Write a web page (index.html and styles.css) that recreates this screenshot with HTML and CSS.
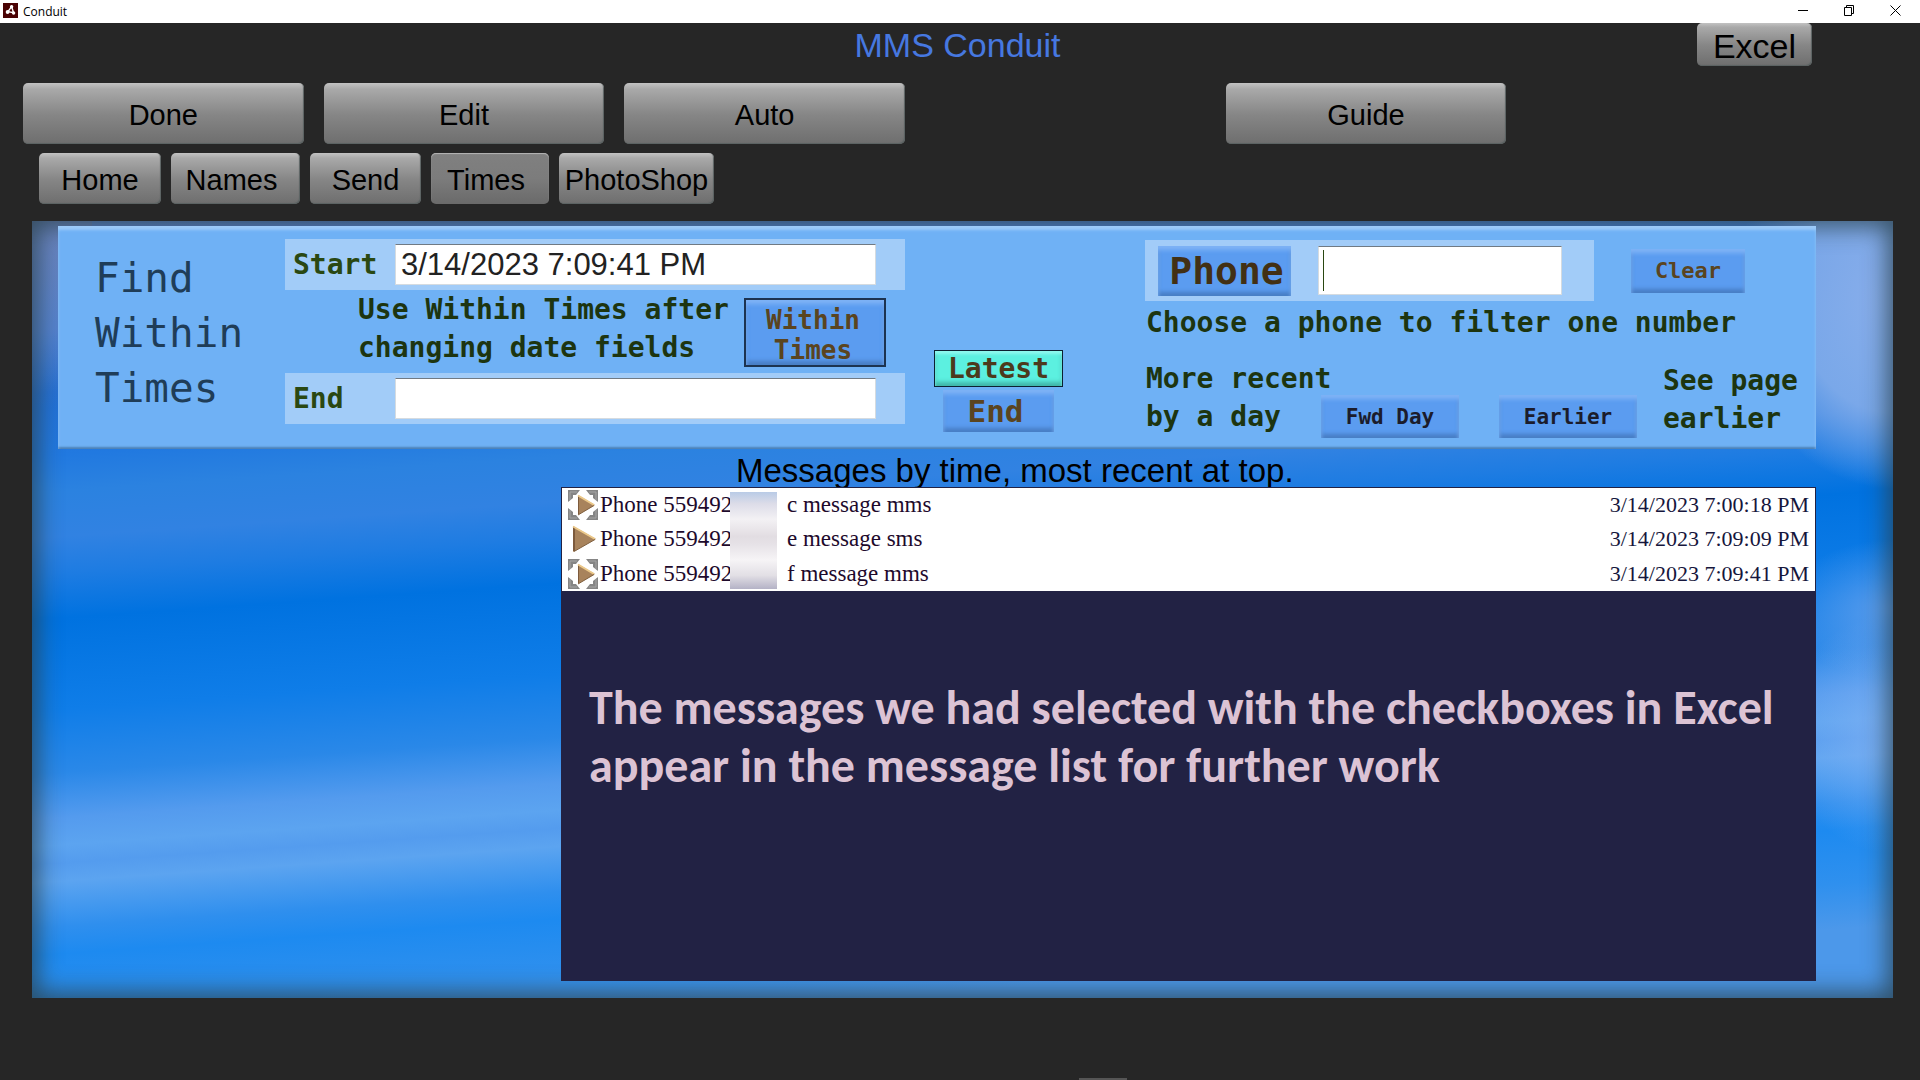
FILE: index.html
```html
<!DOCTYPE html>
<html lang="en">
<head>
    <meta charset="UTF-8">
    <meta name="viewport" content="width=device-width, initial-scale=1.0">
    <title>Conduit</title>
    <link rel="stylesheet" href="styles.css">
</head>
<body>
    <div class="titlebar">
        <svg class="app-icon" width="15" height="15" viewBox="0 0 15 15">
            <rect width="15" height="15" fill="#4a0203"/>
            <path d="M8.6 3.6 L5 8.6 L10.6 9.8 Z" fill="none" stroke="#fff" stroke-width="1.4"/>
            <circle cx="8.6" cy="3.8" r="1.7" fill="#fff"/>
            <circle cx="4.6" cy="9" r="1.9" fill="#fff"/>
            <circle cx="10.6" cy="10" r="1.7" fill="#fff"/>
        </svg>
        <span class="app-name">Conduit</span>
        <button class="win-btn" aria-label="Minimize">
            <svg width="11" height="11" viewBox="0 0 11 11"><path d="M0 5.5h10" stroke="#000"/></svg>
        </button>
        <button class="win-btn" aria-label="Restore">
            <svg width="11" height="11" viewBox="0 0 11 11"><path d="M.5 2.5h7v8h-7zM2.5 2.5v-2h7v8h-2" fill="none" stroke="#000"/></svg>
        </button>
        <button class="win-btn" aria-label="Close">
            <svg width="11" height="11" viewBox="0 0 11 11"><path d="M.5 .5l10 10M10.5 .5l-10 10" stroke="#000"/></svg>
        </button>
    </div>

    <header class="header">
        <h1 class="title">MMS Conduit</h1>
        <button class="btn btn-excel">Excel</button>
    </header>

    <div class="actions">
        <button class="btn">Done</button>
        <button class="btn">Edit</button>
        <button class="btn">Auto</button>
        <button class="btn btn-guide">Guide</button>
    </div>

    <nav class="tabs">
        <button class="btn tab-home">Home</button>
        <button class="btn tab-names">Names</button>
        <button class="btn tab-send">Send</button>
        <button class="btn tab-times active">Times</button>
        <button class="btn tab-photo">PhotoShop</button>
    </nav>

    <main class="stage">
        <section class="filters">
            <h2 class="filters-title">Find<br>Within<br>Times</h2>

            <div class="times">
                <div class="field">
                    <label for="start">Start</label>
                    <input type="text" id="start" value="3/14/2023 7:09:41 PM">
                </div>
                <div class="times-hint">
                    <p class="hint">Use Within Times after<br>changing date fields</p>
                    <button class="blue-btn btn-within">Within<br>Times</button>
                </div>
                <div class="field">
                    <label for="end">End</label>
                    <input type="text" id="end">
                </div>
            </div>

            <div class="jump">
                <button class="blue-btn btn-latest">Latest</button>
                <button class="blue-btn btn-end">End</button>
            </div>

            <div class="phone">
                <div class="phone-row">
                    <div class="phone-field">
                        <button class="blue-btn btn-phone" id="phone-label">Phone</button>
                        <div class="phone-input">
                            <input type="text" id="phone" aria-labelledby="phone-label">
                            <span class="caret"></span>
                        </div>
                    </div>
                    <button class="blue-btn btn-clear">Clear</button>
                </div>
                <p class="hint hint-phone">Choose a phone to filter one number</p>
                <div class="paging">
                    <p class="hint hint-recent">More recent<br>by a day</p>
                    <button class="blue-btn btn-page">Fwd Day</button>
                    <button class="blue-btn btn-page">Earlier</button>
                    <p class="hint hint-earlier">See page<br>earlier</p>
                </div>
            </div>
        </section>

        <section class="messages">
            <h2 class="messages-title">Messages by time, most recent at top.</h2>
            <div class="list">
                <table>
                    <tr>
                        <td class="col-icon"><svg width="30" height="30"><use href="#play-framed"/></svg></td>
                        <td class="col-phone">Phone 559492</td>
                        <td>c message mms</td>
                        <td class="col-time">3/14/2023 7:00:18 PM</td>
                    </tr>
                    <tr>
                        <td class="col-icon"><svg width="30" height="30"><use href="#play"/></svg></td>
                        <td class="col-phone">Phone 559492</td>
                        <td>e message sms</td>
                        <td class="col-time">3/14/2023 7:09:09 PM</td>
                    </tr>
                    <tr>
                        <td class="col-icon"><svg width="30" height="30"><use href="#play-framed"/></svg></td>
                        <td class="col-phone">Phone 559492</td>
                        <td>f message mms</td>
                        <td class="col-time">3/14/2023 7:09:41 PM</td>
                    </tr>
                </table>
                <div class="mask"></div>
            </div>
            <p class="note">The messages we had selected with the checkboxes in Excel appear in the message list for further work</p>
        </section>
    </main>

    <footer class="footer"><span class="grip"></span></footer>

    <svg class="symbols" width="0" height="0">
        <symbol id="play" viewBox="0 0 30 30">
            <path d="M5 2l23 13L5 28z" fill="#a8835c"/>
            <path d="M6 3v24" stroke="#7d5a3c" stroke-width="2"/>
            <path d="M5 2.5l22 12.5" stroke="#ecc98a" stroke-width="2"/>
            <path d="M27 15.5L6 27.5" stroke="#80603f" stroke-width="1"/>
        </symbol>
        <symbol id="play-framed" viewBox="0 0 30 30">
            <path d="M0 0h12l-4 5H5v3l-5 4z M30 0H18l4 5h3v3l5 4z M0 30h12l-4-5H5v-3l-5-4z M30 30H18l4-5h3v-3l5-4z" fill="#858585"/>
            <path d="M2 10V2h7M21 2h7v8M2 20v8h7M21 28h7v-8" fill="none" stroke="#a5a5a5"/>
            <path d="M10 5l17 10-17 10z" fill="#a8835c"/>
            <path d="M10.500 6v18" stroke="#7d5a3c"/>
            <path d="M10 5.500l16 9.500" stroke="#ecc98a" stroke-width="2"/>
            <path d="M26 15.500L10 25" stroke="#80603f"/>
        </symbol>
    </svg>
</body>
</html>
```

FILE: styles.css
```css
* {
    box-sizing: border-box;
}
body {
    margin: 0;
    min-height: 100vh;
    display: flex;
    flex-direction: column;
    background-color: #262626;
    font-family: Arial, "Liberation Sans", sans-serif;
}
h1, h2, p {
    margin: 0;
    font-weight: normal;
}
button {
    padding: 0;
    border: none;
    font-family: inherit;
    cursor: pointer;
}

/* window title bar */
.titlebar {
    display: flex;
    align-items: center;
    height: 23px;
    padding: 0 2px 2px 3px;
    background-color: #fff;
}
.app-name {
    flex: 1;
    margin-left: 5px;
    padding-top: 2px;
    font-family: "Segoe UI", "Open Sans", sans-serif;
    font-size: 12px;
    line-height: 19px;
}
.win-btn {
    display: flex;
    justify-content: center;
    align-items: center;
    width: 46px;
    height: 21px;
    background: none;
}

/* gray buttons */
.btn {
    padding-top: 2px;
    color: #000;
    font-size: 29px;
    line-height: 36px;
    white-space: nowrap;
    border-radius: 5px;
    background: linear-gradient(#c2c2c2, #a9a9a9 10%, #989898 30%, #868686 52%, #6e6e6e);
    box-shadow: inset -1px -1px 1px #5a6262;
}
.btn.active {
    background: linear-gradient(#808080, #7c7c7c 50%, #6a6a6a);
    box-shadow: inset 0 1px 1px #b5b5b5;
}
.header {
    display: grid;
    grid-template-columns: 1fr auto 1fr;
    align-items: start;
    height: 60px;
}
.title {
    grid-column: 2;
    padding-right: 5px;
    color: #4678e0;
    font-size: 34px;
    line-height: 45px;
}
.btn-excel {
    justify-self: end;
    width: 115px;
    height: 43px;
    margin-right: 108px;
    font-size: 34px;
}
.actions {
    display: grid;
    grid-template-columns: repeat(6, 1fr);
    gap: 20px;
    padding: 0 113px 0 23px;
}
.actions .btn {
    height: 61px;
}
.btn-guide {
    grid-column: 5;
}
.tabs {
    display: flex;
    gap: 10px;
    padding: 9px 39px 17px;
}
.tabs .btn {
    height: 51px;
}
.tab-home {
    width: 122px;
}
.tab-names {
    width: 129px;
    padding-right: 8px;
}
.tab-send {
    width: 111px;
}
.tab-times {
    width: 118px;
    padding-right: 8px;
}
.tab-photo {
    width: 155px;
}

/* blue sky area */
.stage {
    margin: 0 27px 0 32px;
    padding: 5px 77px 17px 26px;
    background:
        linear-gradient(rgba(110, 130, 180, 0.7), rgba(110, 130, 180, 0) 24%) left top / 60px 100% no-repeat,
        radial-gradient(ellipse 160px 190px at 100% 10%, rgba(143, 178, 236, 0.95), rgba(130, 172, 234, 0.9) 60%, rgba(130, 172, 234, 0)),
        radial-gradient(ellipse 110px 70px at 100% 50%, rgba(110, 165, 238, 0.8), rgba(110, 165, 238, 0)),
        radial-gradient(ellipse 110px 120px at 100% 66%, rgba(130, 178, 244, 0.8), rgba(130, 178, 244, 0)),
        linear-gradient(176deg, #5f84cc 0, #4a82d8 12%, #2270d6 19%, #2179e0 26%, #2b82e0 30%, #3182e2 35%, #1e7ce2 39%, #0072e0 44%, #0f7de8 54%, #2a88e8 61%, #549bee 66%, #5ca4f0 69%, #549cee 71%, #5ca4f0 73%, #2f8fee 78%, #1d8af0 81%, #2f90ee 87%, #4c98ea 92%, #4c98ea);
    box-shadow: inset 0 0 24px 5px rgba(42, 66, 78, 0.85);
}
.filters {
    display: flex;
    align-items: flex-start;
    height: 223px;
    background-color: #6fb1f5;
    box-shadow: inset 0 4px 3px #9ccaf9, inset 0 -3px 2px -1px #4c81b6;
    font-family: Consolas, "DejaVu Sans Mono", monospace;
}
.filters-title {
    width: 227px;
    padding: 25px 0 0 37px;
    color: #1f3d58;
    font-size: 41px;
    line-height: 55px;
}
.times {
    width: 620px;
    padding-top: 13px;
}
.field {
    display: flex;
    align-items: center;
    height: 51px;
    padding: 0 29px 0 8px;
    background-color: #a2ccf8;
}
.field label {
    width: 102px;
    color: #2a4812;
    font-size: 28px;
    font-weight: bold;
}
.field input, .phone-input input {
    min-width: 0;
    border: 1px solid #d5dbe0;
    border-top: 1px solid #707a84;
    border-radius: 0;
    background-color: #fff;
    color: #222;
    font-family: Arial, "Liberation Sans", sans-serif;
    font-size: 31px;
    outline: none;
}
.field input {
    flex: 1;
    height: 41px;
    padding: 0 5px;
}
.times-hint {
    display: flex;
    justify-content: space-between;
    align-items: center;
    height: 83px;
    padding: 1px 19px 0 73px;
}
.hint {
    align-self: flex-start;
    color: #1d3510;
    font-size: 28px;
    font-weight: bold;
    line-height: 38px;
    white-space: nowrap;
}
.blue-btn {
    background-color: #5b9cf0;
    box-shadow: inset 0 4px 4px #7fb3f6, inset 0 -4px 4px #477dc4;
    color: #5a4420;
    font-weight: bold;
}
.btn-within {
    width: 142px;
    height: 69px;
    padding: 5px 4px 0 0;
    border: 2px solid #1c3350;
    font-size: 26px;
    line-height: 30px;
}
.jump {
    display: flex;
    flex-direction: column;
    align-items: center;
    gap: 3px;
    width: 129px;
    margin-left: 29px;
    padding-top: 124px;
}
.btn-latest {
    width: 129px;
    height: 37px;
    border: 1px solid #0c2030;
    background-color: #5cf0e0;
    box-shadow: inset 0 3px 3px #8ff8ee, inset 0 -4px 4px #3fb5a8;
    color: #4c3a1c;
    font-size: 28px;
    line-height: 34px;
}
.btn-end {
    width: 111px;
    height: 42px;
    padding-right: 6px;
    font-size: 31px;
    line-height: 40px;
}
.phone {
    flex: 1;
    margin-left: 82px;
    padding-top: 14px;
}
.phone-row {
    display: flex;
    align-items: center;
    gap: 37px;
}
.phone-field {
    display: flex;
    align-items: center;
    width: 449px;
    height: 61px;
    padding: 0 32px 0 13px;
    background-color: #a2ccf8;
}
.btn-phone {
    width: 133px;
    height: 50px;
    padding-left: 4px;
    color: #423014;
    font-size: 38px;
    line-height: 48px;
}
.phone-input {
    position: relative;
    flex: 1;
    margin-left: 27px;
}
.phone-input input {
    display: block;
    width: 100%;
    height: 49px;
    padding: 0 5px;
}
.caret {
    position: absolute;
    top: 4px;
    bottom: 4px;
    left: 5px;
    width: 1px;
    background-color: #2a4812;
}
.btn-clear {
    width: 114px;
    height: 44px;
    font-size: 22px;
}
.hint-phone {
    padding: 3px 0 0 1px;
}
.paging {
    display: flex;
    align-items: flex-end;
    height: 78px;
    margin-top: 18px;
    padding-left: 1px;
}
.hint-recent {
    width: 175px;
}
.btn-page {
    width: 138px;
    height: 43px;
    margin-right: 40px;
    color: #1b1c2c;
    font-size: 21px;
}
.hint-earlier {
    align-self: flex-end;
    margin-left: -14px;
}

/* message list */
.messages {
    margin-left: 503px;
    padding-top: 2px;
}
.messages-title {
    height: 36px;
    padding-left: 175px;
    font-size: 33px;
    line-height: 40px;
    white-space: nowrap;
}
.list {
    position: relative;
    border: 1px solid #222244;
    border-bottom: none;
    background-color: #fff;
    font-family: "Times New Roman", "Liberation Serif", serif;
}
.list table {
    width: 100%;
    height: 103px;
    border-collapse: collapse;
    color: #1e0a2c;
    font-size: 23px;
}
.list td {
    height: 34px;
    padding: 0;
    line-height: 30px;
    white-space: nowrap;
}
.list .col-icon {
    width: 38px;
    padding-left: 6px;
}
.col-icon svg {
    display: block;
}
.list .col-phone {
    width: 187px;
}
.list .col-time {
    padding-right: 6px;
    color: #16163c;
    font-size: 22px;
    text-align: right;
}
/* hides the last digits of the numbers */
.mask {
    position: absolute;
    top: 4px;
    left: 168px;
    width: 47px;
    height: 97px;
    background: linear-gradient(#b9cbe6, #dcdce8 12%, #f3f1f4 28%, #e2dde2 46%, #e6e2e7 54%, #f6f4f6 70%, #e2dfe5 86%, #b4b2c6);
}
.note {
    min-height: 390px;
    padding: 88px 28px 0;
    background-color: #222244;
    color: #dcc3d4;
    font-family: Calibri, Carlito, Lato, sans-serif;
    font-size: 48px;
    font-weight: bold;
    line-height: 58px;
}

.footer {
    display: flex;
    flex: 1;
    align-items: flex-end;
    padding-left: 1079px;
}
.grip {
    width: 48px;
    height: 2px;
    background-color: #555;
}
.symbols {
    position: absolute;
}
```
